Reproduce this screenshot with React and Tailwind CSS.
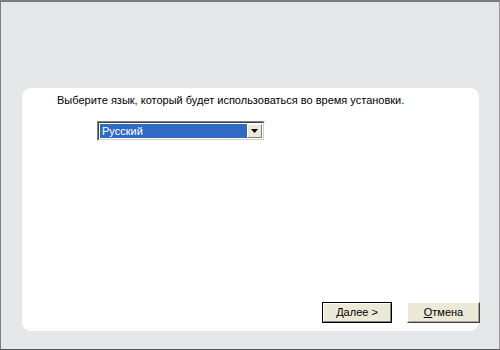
export default function App() {
  return (
    <div
      className="w-[500px] h-[350px] bg-[#e6e7e9] border-t-2 border-l border-r border-b border-t-[#7b7b7b] border-l-[#7b7b7b] border-r-[#9a9a9a] border-b-[#555] pt-[86px] pl-[21px] overflow-hidden"
      style={{ fontFamily: '"Liberation Sans", Arial, sans-serif' }}
    >
      <div className="w-[457px] h-[243px] bg-white rounded-[9px] flex flex-col pt-[5px] pb-[8px]">
        <p className="pl-[35px] text-[11px] leading-[14px] text-black">
          Выберите язык, который будет использоваться во время установки.
        </p>

        <div className="ml-[75px] mt-[14px] w-[168px] h-[20px] flex border border-t-[#808080] border-l-[#808080] border-r-white border-b-white">
          <div className="flex-1 flex border border-t-[#404040] border-l-[#404040] border-r-[#d4d0c8] border-b-[#d4d0c8] bg-white p-[1px]">
            <div className="flex-1 bg-[#316ac5] text-white text-[11px] leading-[14px] pl-[2px]">
              Русский
            </div>
            <div className="w-[15px] bg-[#ece9d8] flex items-center justify-center border border-t-white border-l-white border-r-[#808080] border-b-[#808080]">
              <svg width="7" height="4" viewBox="0 0 7 4">
                <path d="M0 0h7L3.5 4z" fill="#000" />
              </svg>
            </div>
          </div>
        </div>

        <div className="mt-auto flex justify-end gap-[15px] text-[11px] text-black">
          <button className="w-[70px] h-[21px] bg-[#ece9d8] border border-black flex items-center justify-center">
            <span className="w-full h-full flex items-center justify-center border border-t-white border-l-white border-r-[#808080] border-b-[#808080]">
              <span className="underline underline-offset-1">Д</span>алее &gt;
            </span>
          </button>
          <button className="w-[73px] h-[21px] -mr-[1px] bg-[#ece9d8] flex items-center justify-center border border-t-white border-l-white border-r-[#404040] border-b-[#404040]">
            <span className="w-full h-full flex items-center justify-center border border-t-transparent border-l-transparent border-r-[#aca899] border-b-[#aca899]">
              <span className="underline underline-offset-1">О</span>тмена
            </span>
          </button>
        </div>
      </div>
    </div>
  );
}
